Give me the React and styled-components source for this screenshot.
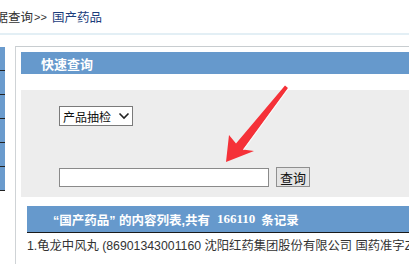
import styled, { createGlobalStyle } from 'styled-components'

const GlobalStyle = createGlobalStyle`
  html, body {
    margin: 0;
    padding: 0;
    overflow: hidden;
    background: #fff;
  }
  body {
    font-family: 'Liberation Sans', 'Noto Sans CJK SC', sans-serif;
    font-size: 12px;
    color: #333;
  }
`

const Page = styled.div`
  position: relative;
  width: 409px;
  height: 264px;
  overflow: hidden;
`

const Crumb = styled.div`
  height: 33px;
  display: flex;
  align-items: center;
  white-space: nowrap;
  margin-left: -17px;
  font-size: 12.5px;
  color: #333;
  border-bottom: 2px solid #e3eff5;
`

const CrumbSep = styled.span`
  margin: 0 5px 0 1px;
  font-size: 11px;
`

const CrumbCurrent = styled.span`
  color: #1c3d7c;
`

const Body = styled.div`
  display: flex;
  margin-top: 11px;
`

const Sidebar = styled.div`
  width: 5px;
  margin-top: 1px;
  margin-right: 10px;
  display: flex;
  flex-direction: column;
  align-self: flex-start;
`

const SideItem = styled.div`
  height: 23px;
  background: #6a9bcd;
  border-bottom: 1px solid #222;
`

const Panel = styled.div`
  flex: 1;
  min-width: 0;
  border-left: 1px solid #cfd3d6;
  border-top: 1px solid #c8cdd0;
  padding: 5px 0 0 5px;
  height: 240px;
`

const BlueBar = styled.div`
  display: flex;
  align-items: center;
  height: ${(p) => p.$h}px;
  margin-left: ${(p) => p.$indent || 0}px;
  padding-left: ${(p) => p.$pad}px;
  background: #6699cc;
  color: #fff;
  font-family: 'Liberation Sans', 'Noto Sans CJK SC', sans-serif;
  font-weight: 700;
  font-size: ${(p) => p.$size || 13}px;
  white-space: nowrap;
  border-bottom: ${(p) => (p.$line ? '1px solid #1a1a1a' : 'none')};
`

const Num = styled.span`
  font-family: 'Liberation Serif', serif;
  font-weight: 700;
  font-size: 13px;
  margin: 0 6px 0 7px;
`

const SearchBox = styled.div`
  margin-top: 16px;
  background: #ededed;
  padding: 16px 0 10px 38px;
  display: flex;
  flex-direction: column;
  gap: 41px;
`

const SelectWrap = styled.div`
  width: 72px;
  height: 18px;
  display: flex;
  align-items: center;
  background: #fff;
  border: 1px solid #7a7a7a;
`

const Select = styled.select`
  appearance: none;
  border: none;
  outline: none;
  background: transparent;
  padding: 0 0 0 3px;
  width: 58px;
  font-family: 'Noto Sans CJK SC', sans-serif;
  font-size: 12px;
  color: #111;
`

const Row = styled.div`
  display: flex;
  align-items: center;
  gap: 7px;
`

const Input = styled.input`
  width: 208px;
  height: 17px;
  padding: 0;
  border: 1px solid #8a8a8a;
  background: #fff;
  outline: none;
`

const Button = styled.button`
  width: 34px;
  height: 20px;
  padding: 0;
  border: 1px solid #8f8f8f;
  background: #e4e4e4;
  font-family: 'Noto Sans CJK SC', sans-serif;
  font-size: 13px;
  color: #111;
  line-height: 1;
`

const Spacer = styled.div`
  height: 9px;
`

const ListRow = styled.div`
  margin-left: 6px;
  height: 24px;
  display: flex;
  align-items: center;
  white-space: nowrap;
  font-size: 12.3px;
  color: #333;
`

const Arrow = styled.svg`
  position: absolute;
  left: 0;
  top: 0;
  pointer-events: none;
`

export default function App() {
  return (
    <Page>
      <GlobalStyle />
      <Crumb>
        数据查询<CrumbSep>&gt;&gt;</CrumbSep>
        <CrumbCurrent>国产药品</CrumbCurrent>
      </Crumb>
      <Body>
        <Sidebar>
          {[0, 1, 2, 3, 4, 5].map((i) => (
            <SideItem key={i} />
          ))}
        </Sidebar>
        <Panel>
          <BlueBar $h={22} $pad={20}>快速查询</BlueBar>
          <SearchBox>
            <SelectWrap>
              <Select defaultValue="产品抽检">
                <option>产品抽检</option>
              </Select>
              <svg width="12" height="8" viewBox="0 0 12 8">
                <path d="M1.5 1.5 L6 6 L10.5 1.5" fill="none" stroke="#222" strokeWidth="1.6" />
              </svg>
            </SelectWrap>
            <Row>
              <Input type="text" />
              <Button>查询</Button>
            </Row>
          </SearchBox>
          <Spacer />
          <BlueBar $h={26} $pad={26} $indent={6} $size={12.5} $line>
            “国产药品” 的内容列表,共有<Num>166110</Num>条记录
          </BlueBar>
          <ListRow>
            1.龟龙中风丸 (86901343001160 沈阳红药集团股份有限公司 国药准字Z20025176)
          </ListRow>
        </Panel>
      </Body>
      <Arrow width="409" height="264" viewBox="0 0 409 264">
        <polygon
          points="226,162 229,135 236,143.5 285,85.5 288,88 243,149.5 254,151"
          fill="#f53138"
        />
        <path d="M243.5 150 L288.5 88.5" stroke="#fff" strokeWidth="1.2" opacity="0.7" />
      </Arrow>
    </Page>
  )
}
